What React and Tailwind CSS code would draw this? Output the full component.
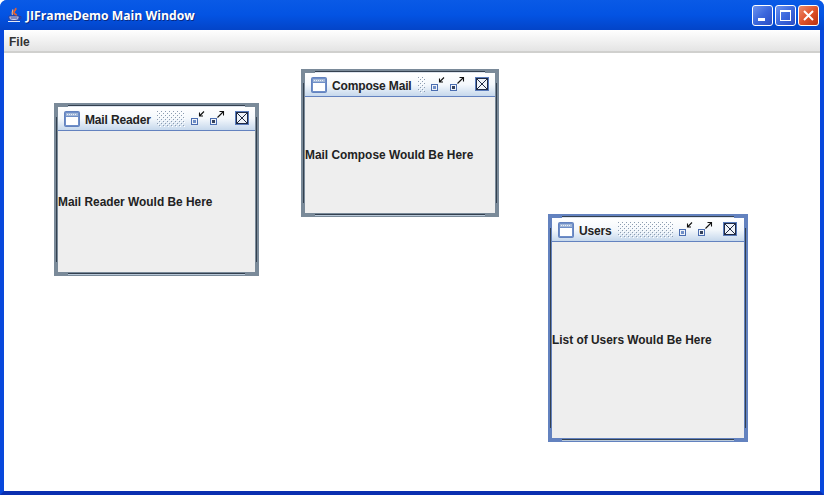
import React from "react";

function JavaCup() {
  return (
    <svg width="16" height="16" viewBox="0 0 16 16" className="shrink-0">
      <path d="M8.500 1c1.500 2-2.500 3-1.500 5s3 1 2 3" fill="none" stroke="#e8602c" strokeWidth="1.800" />
      <path d="M6 2.500c-.5 2-1.500 3-.5 5.500" fill="none" stroke="#f4b183" strokeWidth="1.200" />
      <path d="M2 9h10v2c0 1.500-2 2.500-5 2.500S2 12.500 2 11z" fill="#cdd6f2" stroke="#2f3f96" strokeWidth="1" />
      <path d="M12 9.500h2v2l-2 1" fill="none" stroke="#2f3f96" strokeWidth="1" />
      <path d="M3.500 11h7" stroke="#2f3f96" strokeWidth="1" />
      <path d="M1 14.500h12" stroke="#e3e8f8" strokeWidth="1" />
    </svg>
  );
}

function FrameIcon() {
  return (
    <svg width="16" height="16" viewBox="0 0 16 16" className="shrink-0" shapeRendering="crispEdges">
      <rect x="0" y="0" width="16" height="16" rx="2" fill="#6382bf" shapeRendering="auto" />
      <rect x="1" y="1" width="14" height="14" fill="#6f8fc8" />
      <rect x="2" y="2" width="12" height="3" fill="#a3b8d8" />
      <path d="M3 3.500h1M5 3.500h1M7 3.500h1M9 3.500h1M11 3.500h1" stroke="#e8eef6" />
      <rect x="2" y="6" width="12" height="8" fill="#fff" />
    </svg>
  );
}

function Bumps({ width }) {
  const id = `bumps-${width}`;
  return (
    <svg width={width} height="16" className="shrink-0" shapeRendering="crispEdges">
      <defs>
        <pattern id={id} width="4" height="4" patternUnits="userSpaceOnUse">
          <rect x="0" y="0" width="1" height="1" fill="#8c9cb0" />
          <rect x="2" y="2" width="1" height="1" fill="#8c9cb0" />
          <rect x="1" y="1" width="1" height="1" fill="#ffffff" />
          <rect x="3" y="3" width="1" height="1" fill="#ffffff" />
        </pattern>
      </defs>
      <rect width={width} height="16" fill={`url(#${id})`} />
    </svg>
  );
}

function MinButton() {
  return (
    <svg width="15" height="16" viewBox="0 0 15 16" className="shrink-0" shapeRendering="crispEdges">
      <rect x="0" y="8" width="7" height="7" fill="#4a6db0" />
      <rect x="1" y="9" width="5" height="5" fill="#eef2f8" />
      <rect x="2" y="10" width="3" height="3" fill="#6f8fc8" />
      <path d="M13 1.500L8.500 6M8.500 2.500V6H12" fill="none" stroke="#111" strokeWidth="1.100" shapeRendering="auto" />
    </svg>
  );
}

function MaxButton() {
  return (
    <svg width="15" height="16" viewBox="0 0 15 16" className="shrink-0" shapeRendering="crispEdges">
      <rect x="0" y="8" width="7" height="7" fill="#4a6db0" />
      <rect x="1" y="9" width="5" height="5" fill="#eef2f8" />
      <rect x="2" y="10" width="3" height="3" fill="#33405c" />
      <path d="M7.500 7.500L13.500 1.500M9.500 1.500h4V5.500" fill="none" stroke="#111" strokeWidth="1.100" shapeRendering="auto" />
    </svg>
  );
}

function CloseButton() {
  return (
    <svg width="14" height="14" viewBox="0 0 14 14" className="shrink-0">
      <rect x="0" y="0" width="14" height="14" fill="#5a7cbc" />
      <rect x="1" y="1" width="12" height="12" fill="#eef2f8" />
      <rect x="1.500" y="1.500" width="11" height="11" fill="none" stroke="#1f2a44" strokeWidth="1" />
      <path d="M2 2l10 10M12 2L2 12" stroke="#1f2a44" strokeWidth="1" />
    </svg>
  );
}

function InternalFrame({ title, text, left, top, width, height, bumps, active }) {
  return (
    <div
      className={`absolute flex flex-col border-4 ${active ? "border-[#6382bf]" : "border-[#7a8a99]"}`}
      style={{ left, top, width, height }}
    >
      <div className="absolute left-[10px] right-[10px] -top-[2px] h-px bg-[#33404f]" />
      <div className="absolute left-[10px] right-[10px] -top-px h-px bg-[#dde4ee]" />
      <div className="absolute left-[10px] right-[10px] -bottom-[2px] h-px bg-[#33404f]" />
      <div className="absolute left-[10px] right-[10px] -bottom-[3px] h-px bg-[#b8c8d8]" />
      <div className="absolute -left-[2px] top-[10px] bottom-[10px] w-px bg-[#33404f]" />
      <div className="absolute -right-[2px] top-[10px] bottom-[10px] w-px bg-[#33404f]" />
      <div className="flex h-6 shrink-0 items-center border-b border-[#6382bf] bg-gradient-to-b from-[#ffffff] via-[#f4f8fc] to-[#c6d8ec] pl-[6px] pt-px">
        <FrameIcon />
        <span className="ml-[5px] mt-[1px] shrink-0 font-['Liberation_Sans',sans-serif] text-[12px] font-bold leading-none tracking-[-0.15px] text-[#222]">
          {title}
        </span>
        <div className="ml-[6px]">
          <Bumps width={bumps} />
        </div>
        <div className="ml-[6px] -mt-[3px] flex items-center gap-[4px]">
          <MinButton />
          <MaxButton />
        </div>
        <div className="ml-[10px] -mt-[2px]">
          <CloseButton />
        </div>
      </div>
      <div className="flex flex-1 items-center bg-[#eeeeee] pt-[2px] font-['Liberation_Sans',sans-serif] text-[11.900px] font-bold leading-none text-[#222]">
        {text}
      </div>
    </div>
  );
}

function CaptionButton({ children, close }) {
  return (
    <div
      className={`flex h-[21px] w-[21px] items-center justify-center rounded-[3px] border border-white ${
        close
          ? "bg-gradient-to-br from-[#ec8a6a] via-[#e0532a] to-[#b8300f]"
          : "bg-gradient-to-br from-[#6d92ee] via-[#3c68dd] to-[#2a4cc4]"
      }`}
    >
      {children}
    </div>
  );
}

export default function App() {
  return (
    <div className="flex h-[495px] w-[824px] flex-col overflow-hidden rounded-t-[7px] bg-[#0a4ad8]">
      <div className="flex h-[30px] shrink-0 items-center bg-gradient-to-b from-[#0a5ae6] via-[#0353e3] to-[#0344c8] pl-[7px] pr-[5px]">
        <JavaCup />
        <span className="ml-[3px] mt-[3px] font-['Open_Sans',sans-serif] text-[12.200px] font-bold leading-none text-white [text-shadow:1px_1px_0_#0a2a80]">
          JIFrameDemo Main Window
        </span>
        <div className="ml-auto flex gap-[2px]">
          <CaptionButton>
            <svg width="15" height="15" viewBox="0 0 15 15" shapeRendering="crispEdges">
              <rect x="3" y="10" width="7" height="3" fill="#fff" />
            </svg>
          </CaptionButton>
          <CaptionButton>
            <svg width="15" height="15" viewBox="0 0 15 15" shapeRendering="crispEdges">
              <rect x="2.500" y="2.500" width="10" height="10" fill="none" stroke="#fff" />
              <rect x="2" y="2" width="11" height="2" fill="#fff" />
            </svg>
          </CaptionButton>
          <CaptionButton close>
            <svg width="15" height="15" viewBox="0 0 15 15">
              <path d="M3 3l9 9M12 3l-9 9" stroke="#fff" strokeWidth="2" />
            </svg>
          </CaptionButton>
        </div>
      </div>
      <div className="flex min-h-0 flex-1 flex-col border-x-4 border-b-4 border-x-[#0848dc] border-b-[#0a2fb0]">
        <div className="flex h-[23px] shrink-0 items-center border-b-2 border-[#d0d0ce] bg-gradient-to-b from-[#ffffff] to-[#e4e4e4] pl-[5px] pt-[2px] font-['Liberation_Sans',sans-serif] text-[12px] font-bold leading-none text-[#333]">
          File
        </div>
        <div className="relative flex-1 bg-white">
          <InternalFrame title="Mail Reader" text="Mail Reader Would Be Here" left={50} top={50} width={205} height={173} bumps={28} />
          <InternalFrame title="Compose Mail" text="Mail Compose Would Be Here" left={297} top={16} width={198} height={148} bumps={7} />
          <InternalFrame title="Users" text="List of Users Would Be Here" left={544} top={161} width={200} height={228} bumps={55} active />
        </div>
      </div>
    </div>
  );
}
